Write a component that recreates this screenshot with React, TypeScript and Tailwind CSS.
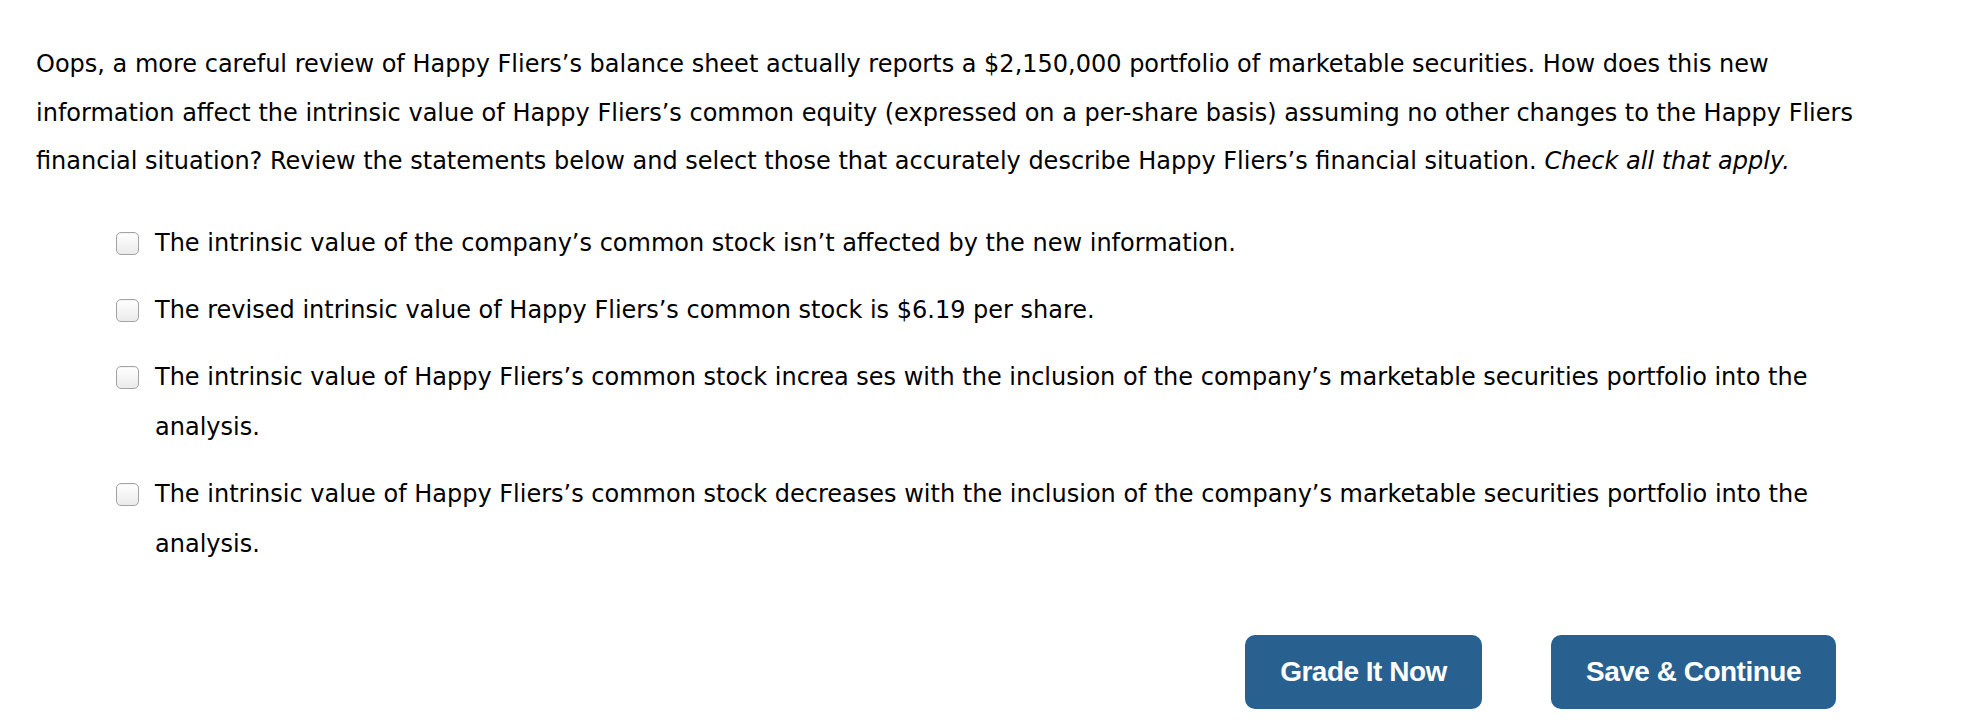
const options = [
  'The intrinsic value of the company’s common stock isn’t affected by the new information.',
  'The revised intrinsic value of Happy Fliers’s common stock is $6.19 per share.',
  'The intrinsic value of Happy Fliers’s common stock increa ses with the inclusion of the company’s marketable securities portfolio into the analysis.',
  'The intrinsic value of Happy Fliers’s common stock decreases with the inclusion of the company’s marketable securities portfolio into the analysis.',
];

function Checkbox() {
  return (
    <span className="mt-[14px] block h-[23px] w-[23px] shrink-0 rounded-[5px] border border-[#a3a3a3] bg-gradient-to-b from-white to-[#ebebeb] shadow-[inset_0_1px_1px_rgba(0,0,0,0.05)]" />
  );
}

export default function App() {
  return (
    <div className="min-h-[726px] w-[1980px] bg-white font-['DejaVu_Sans',Verdana,sans-serif] text-[24px] text-black">
      <div className="pl-[36px] pr-[96px] pt-[40px]">
        <p className="leading-[48.5px]">
          Oops, a more careful review of Happy Fliers’s balance sheet actually reports a $2,150,000 portfolio of
          marketable securities. How does this new information affect the intrinsic value of Happy Fliers’s common
          equity (expressed on a per-share basis) assuming no other changes to the Happy Fliers financial situation?
          Review the statements below and select those that accurately describe Happy Fliers’s financial situation.
          <i className="ml-[8px]">Check all that apply.</i>
        </p>

        <ul className="mt-[32px] flex flex-col gap-[17px] pl-[80px]">
          {options.map((text, i) => (
            <li key={i} className="flex items-start gap-[16px] leading-[50px]">
              <Checkbox />
              <span>{text}</span>
            </li>
          ))}
        </ul>
      </div>

      <div className="mt-[66px] flex justify-end gap-[69px] pr-[144px] font-['Liberation_Sans',Arial,sans-serif]">
        <button className="h-[74px] w-[237px] rounded-[10px] bg-[#28608f] text-[28px] font-bold tracking-[-0.5px] text-white">
          Grade It Now
        </button>
        <button className="h-[74px] w-[285px] rounded-[10px] bg-[#28608f] text-[28px] font-bold tracking-[-0.5px] text-white">
          Save &amp; Continue
        </button>
      </div>
    </div>
  );
}
